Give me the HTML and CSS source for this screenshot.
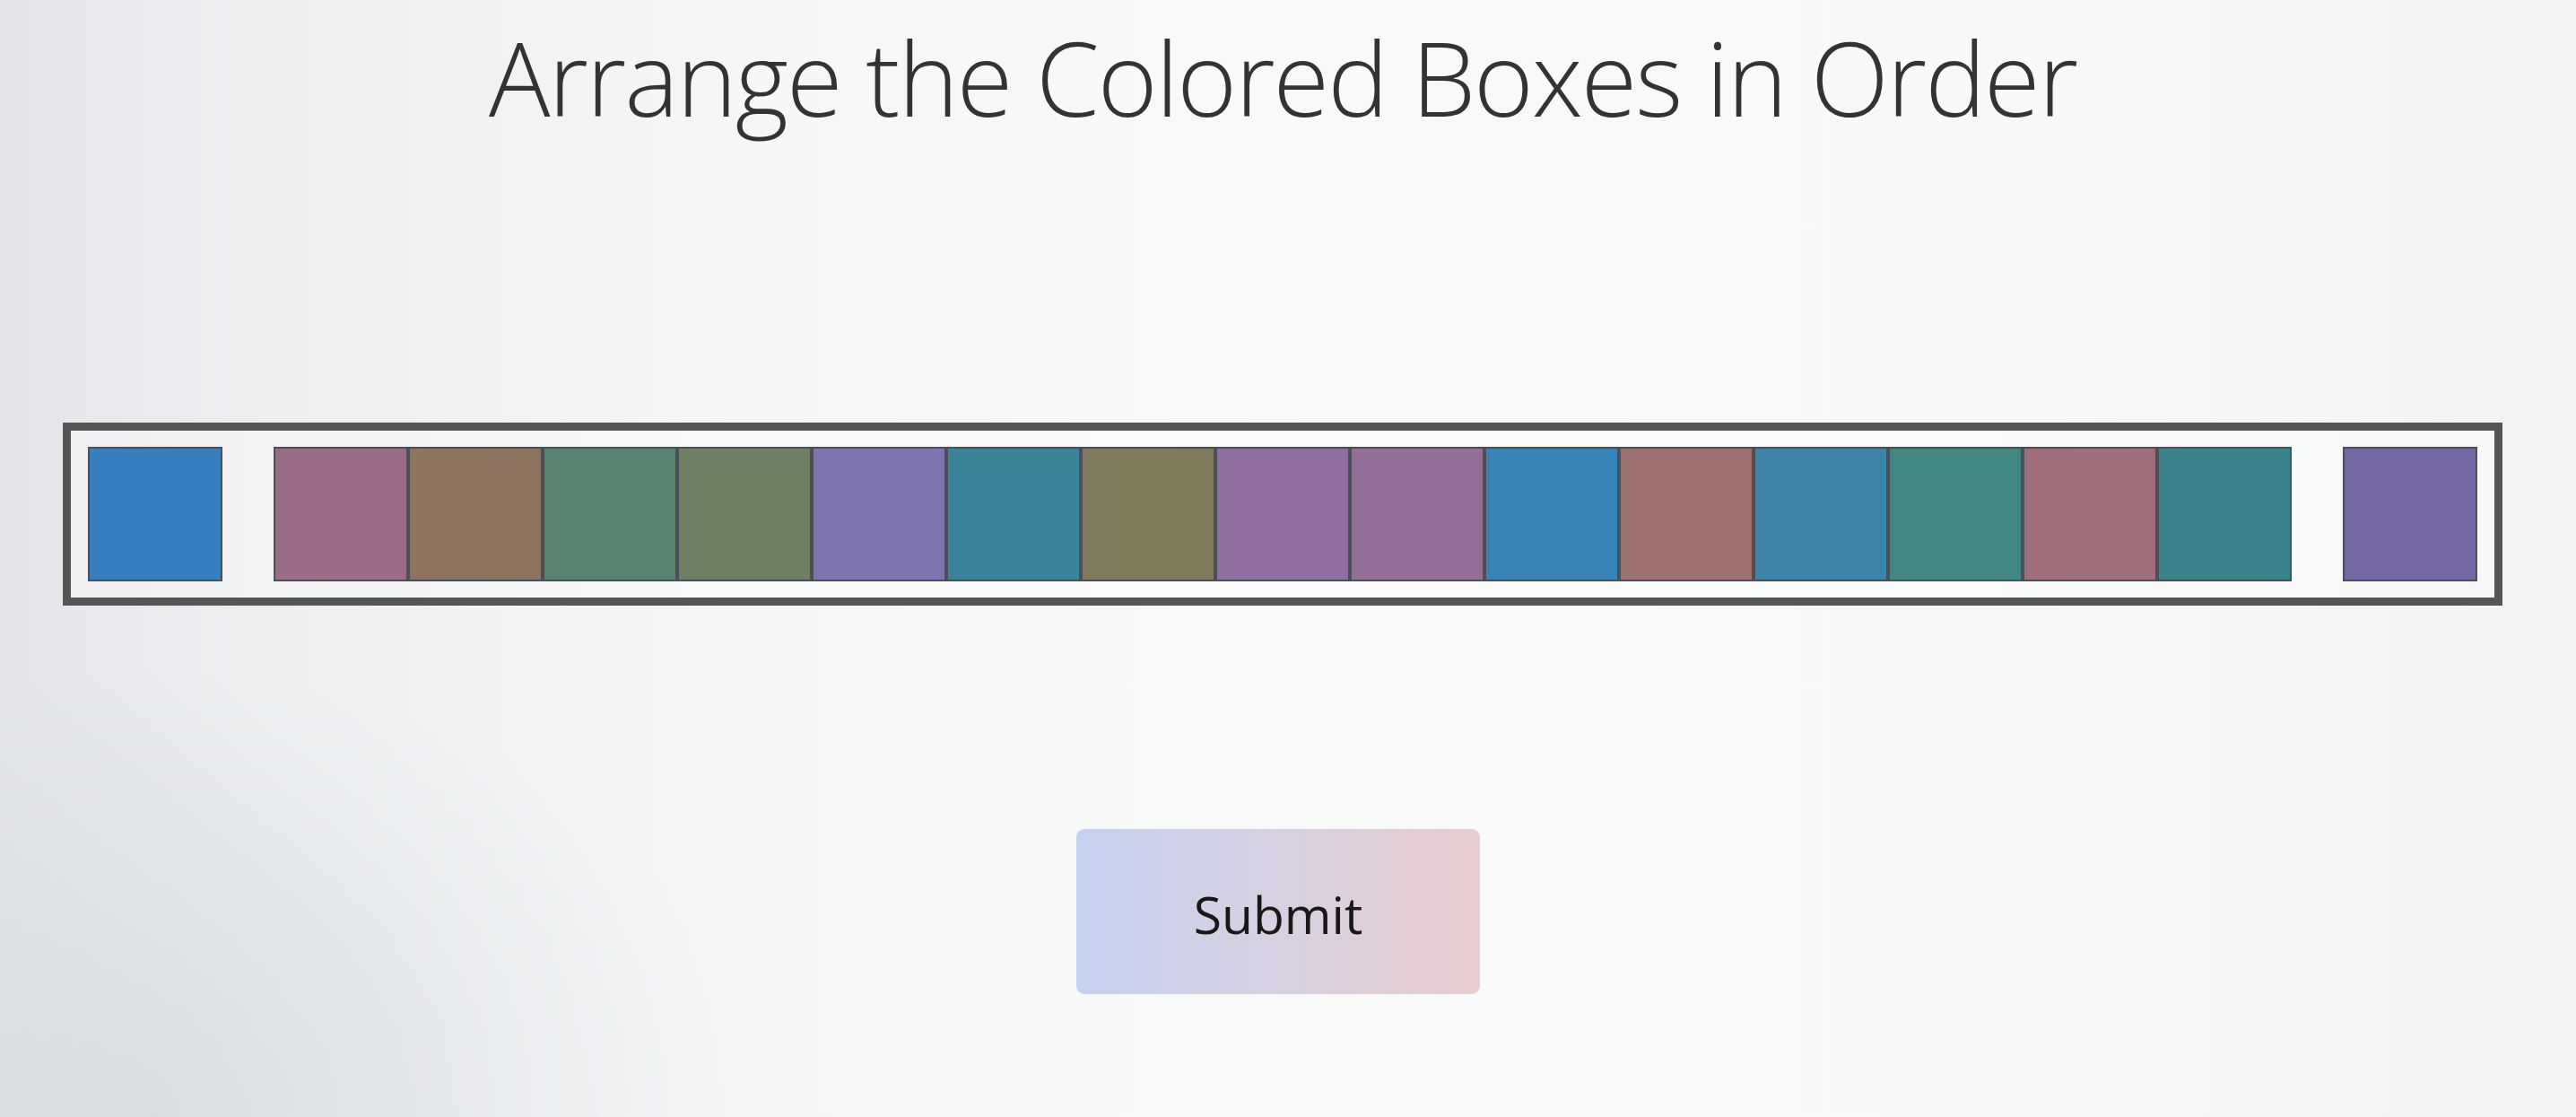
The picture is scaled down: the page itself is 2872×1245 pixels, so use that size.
FILE: index.html
```html
<!DOCTYPE html>
<html lang="en">
<head>
<meta charset="utf-8">
<title>Arrange the Colored Boxes in Order</title>
<link rel="stylesheet" href="styles.css">
</head>
<body>
<main class="page">
  <h1 class="title">Arrange the Colored Boxes in Order</h1>
  <div class="tray">
    <div class="box c1"></div>
    <div class="strip">
      <div class="box c2"></div>
      <div class="box c3"></div>
      <div class="box c4"></div>
      <div class="box c5"></div>
      <div class="box c6"></div>
      <div class="box c7"></div>
      <div class="box c8"></div>
      <div class="box c9"></div>
      <div class="box c10"></div>
      <div class="box c11"></div>
      <div class="box c12"></div>
      <div class="box c13"></div>
      <div class="box c14"></div>
      <div class="box c15"></div>
      <div class="box c16"></div>
    </div>
    <div class="box c17"></div>
  </div>
  <button class="submit" type="button">Submit</button>
</main>
</body>
</html>
```

FILE: styles.css
```css
html, body {
  margin: 0;
  padding: 0;
  height: 100%;
}

body {
  background:
    radial-gradient(ellipse 700px 500px at 150px 1245px, rgba(205, 211, 217, 0.55), rgba(205, 211, 217, 0) 100%),
    linear-gradient(90deg, #e4e6ea 0px, #eceef0 300px, #f5f6f7 800px, #f8f9f9 1400px, #f7f8f8 2300px, #f2f3f4 2872px);
  font-family: "Open Sans", "Noto Sans", sans-serif;
  overflow: hidden;
}

.page {
  display: flex;
  flex-direction: column;
  align-items: center;
  padding-right: 12px;
}

.title {
  margin: 18px 0 0;
  font-family: "Open Sans", sans-serif;
  font-weight: 300;
  font-size: 114px;
  line-height: 1.2;
  color: #333333;
  letter-spacing: -2px;
}

.tray {
  margin-top: 316px;
  display: flex;
  gap: 57px;
  padding: 18px 19px;
  border: 9px solid #555555;
  background: rgba(255, 255, 255, 0.3);
}

.strip {
  display: flex;
}

.box {
  width: 150px;
  height: 150px;
  box-sizing: border-box;
  border: 2px solid #4c4f55;
}

.c1 { background: #3780c0; }
.c2 { background: #9b6c88; }
.c3 { background: #8d745f; }
.c4 { background: #588371; }
.c5 { background: #6d8064; }
.c6 { background: #7f74b0; }
.c7 { background: #3a849c; }
.c8 { background: #817b5e; }
.c9 { background: #8f6ea1; }
.c10 { background: #947099; }
.c11 { background: #3584b5; }
.c12 { background: #9e706f; }
.c13 { background: #3c84a8; }
.c14 { background: #418882; }
.c15 { background: #a06e7a; }
.c16 { background: #3c848c; }
.c17 { background: #7567a3; }

.submit {
  margin-top: 249px;
  margin-right: 10px;
  width: 450px;
  height: 184px;
  border: none;
  border-radius: 9px;
  background: linear-gradient(90deg, #c5d1ef 0%, #d6d1e3 45%, #e7cdcf 100%);
  font-family: "Open Sans", sans-serif;
  font-weight: 400;
  font-size: 57px;
  color: #1a1718;
  padding: 6px 0 0;
}
```
